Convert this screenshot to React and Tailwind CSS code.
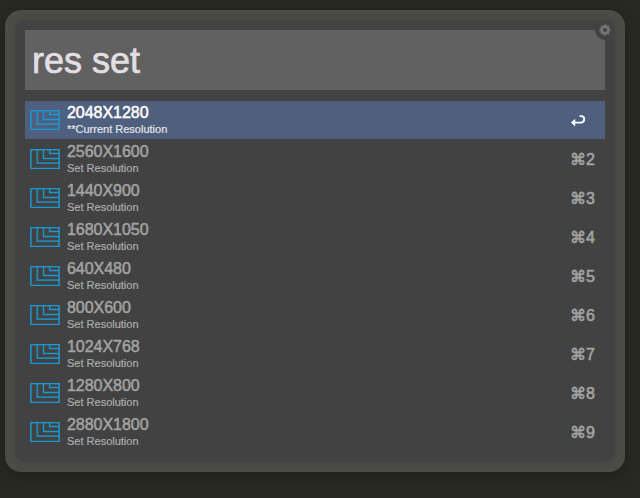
const rows = [
  ["2048X1280", "**Current Resolution"],
  ["2560X1600", "Set Resolution"],
  ["1440X900", "Set Resolution"],
  ["1680X1050", "Set Resolution"],
  ["640X480", "Set Resolution"],
  ["800X600", "Set Resolution"],
  ["1024X768", "Set Resolution"],
  ["1280X800", "Set Resolution"],
  ["2880X1800", "Set Resolution"],
];

function ResolutionIcon() {
  return (
    <svg width="30" height="20" viewBox="0 0 30 20" fill="none" className="shrink-0">
      <rect x="0.9" y="0.6" width="28.2" height="18.9" stroke="#1b97d1" strokeWidth="1.5" />
      <path d="M7.3 1V14.2H29" stroke="#1b97d1" strokeOpacity="0.8" strokeWidth="1.8" />
      <path d="M13.5 1V9.5H29M19.6 1V4.5H29" stroke="#1b97d1" strokeWidth="1.4" />
    </svg>
  );
}

function ReturnIcon() {
  return (
    <svg width="15" height="12" viewBox="0 0 15 12" fill="none" className="ml-px">
      <path d="M8.6 1.1H10.2C12.4 1.1 13.2 2.4 13.2 4.1C13.2 6.4 12 7.6 9.6 7.6H1.5" stroke="#fff" strokeWidth="1.9" />
      <path d="M0 7.6L4.2 3.8V11.4Z" fill="#fff" />
    </svg>
  );
}

function GearIcon() {
  const teeth = [0, 45, 90, 135, 180, 225, 270, 315];
  return (
    <svg width="12" height="12" viewBox="0 0 12 12" fill="none" className="mr-px">
      <circle cx="6" cy="6" r="3.3" stroke="#747474" strokeWidth="2.6" />
      {teeth.map((angle) => (
        <rect key={angle} x="4.8" y="0.4" width="2.4" height="2" fill="#747474" transform={`rotate(${angle} 6 6)`} />
      ))}
    </svg>
  );
}

function Row({ title, subtitle, index }) {
  const active = index === 0;
  return (
    <li className={`flex h-[38px] items-center pl-[5px] ${active ? "bg-[#4f607f] text-white" : "text-[#a2a2a2]"}`}>
      <ResolutionIcon />
      <div className="ml-[7px] flex-1">
        <div className="h-[18px] text-[16px] leading-[18px] tracking-[-0.04px] [-webkit-text-stroke:0.5px_currentColor]">{title}</div>
        <div className={`h-[15px] text-[11px] leading-[15px] [-webkit-text-stroke:0.2px_currentColor] ${active ? "text-[#e4e4e8]" : "text-[#acacac]"}`}>{subtitle}</div>
      </div>
      <div className="flex w-[35px] items-center pt-[2px] text-[16px] leading-[18px] [-webkit-text-stroke:0.6px_currentColor]">
        {active ? (
          <ReturnIcon />
        ) : (
          <>
            <span className="w-[16px] font-['DejaVu_Sans',sans-serif] text-[16px]">⌘</span>
            <span>{index + 1}</span>
          </>
        )}
      </div>
    </li>
  );
}

export default function App() {
  return (
    <div className="h-[498px] w-[640px] overflow-hidden bg-[#282923] pt-[10px] pl-[5px] font-['Liberation_Sans',Arial,sans-serif]">
      <main className="h-[462px] w-[620px] rounded-[16px] bg-[#4b4c46] p-[10px] shadow-[0_4px_16px_rgba(0,0,0,0.22)]">
        <section className="relative h-[442px] w-[600px] rounded-[10px] bg-[#424242] p-[10px] shadow-[0_0_4px_1px_rgba(66,66,66,0.55)]">
          <div className="flex h-[60px] items-center bg-[#616161] pt-[2px] pl-[7px] text-[36px] leading-[60px] text-[#e2dfe2] [-webkit-text-stroke:0.7px_currentColor]">
            res set
          </div>
          <button className="absolute top-0 right-0 flex h-[20px] w-[20px] items-center justify-center rounded-full bg-[#424242]" aria-label="Settings">
            <GearIcon />
          </button>
          <ul className="mt-[11px] flex flex-col gap-px">
            {rows.map(([title, subtitle], index) => (
              <Row key={title} title={title} subtitle={subtitle} index={index} />
            ))}
          </ul>
        </section>
      </main>
    </div>
  );
}
